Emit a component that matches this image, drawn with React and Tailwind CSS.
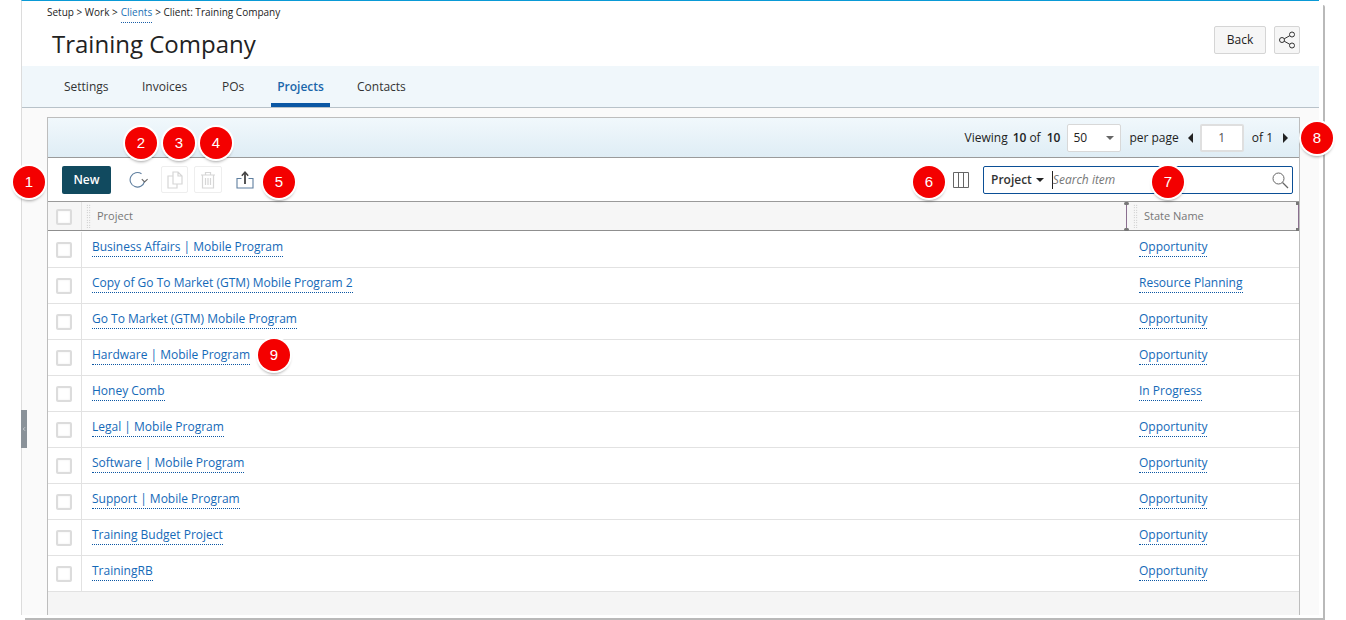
import { ChevronLeft } from "lucide-react";

const rows = [
  ["Business Affairs | Mobile Program", "Opportunity"],
  ["Copy of Go To Market (GTM) Mobile Program 2", "Resource Planning"],
  ["Go To Market (GTM) Mobile Program", "Opportunity"],
  ["Hardware | Mobile Program", "Opportunity"],
  ["Honey Comb", "In Progress"],
  ["Legal | Mobile Program", "Opportunity"],
  ["Software | Mobile Program", "Opportunity"],
  ["Support | Mobile Program", "Opportunity"],
  ["Training Budget Project", "Opportunity"],
  ["TrainingRB", "Opportunity"],
];

const tabs = [
  { label: "Settings", cls: "w-[78px] ml-[24px]" },
  { label: "Invoices", cls: "w-[80px]" },
  { label: "POs", cls: "w-[67px]" },
  { label: "Projects", cls: "w-[59px]", active: true },
  { label: "Contacts", cls: "w-[78px] ml-[9px]" },
];

const badges = [
  { n: 1, cls: "left-[13px] top-[166px]" },
  { n: 2, cls: "left-[125px] top-[127px]" },
  { n: 3, cls: "left-[163px] top-[127px]" },
  { n: 4, cls: "left-[200px] top-[127px]" },
  { n: 5, cls: "left-[263px] top-[166px]" },
  { n: 6, cls: "left-[913px] top-[166px]" },
  { n: 7, cls: "left-[1152px] top-[166px]" },
  { n: 8, cls: "left-[1301px] top-[122px]" },
  { n: 9, cls: "left-[258px] top-[339px]" },
];

const Badge = ({ n, cls }) => (
  <div
    className={`absolute ${cls} w-8 h-8 rounded-full bg-[#f40000] ring-2 ring-white shadow-[0_3px_3px_rgba(0,0,0,0.35)] flex items-center justify-center text-white text-[15px] font-['Liberation_Sans',sans-serif]`}
  >
    {n}
  </div>
);

const Check = () => (
  <div className="w-4 h-4 bg-white border-2 border-[#dcdcdc] rounded-[2px] shadow-[inset_0_0_2px_rgba(0,0,0,0.08)]" />
);

const Grip = () => (
  <div className="w-[5px] h-6 bg-[radial-gradient(#b5b5b5_0.7px,transparent_0.8px)] bg-[length:2.5px_2.5px]" />
);

const App = () => (
  <div className="relative w-[1346px] h-[620px] overflow-hidden bg-white font-['Open_Sans',sans-serif] text-[#222]">
    {/* offset page frame behind the window */}
    <div className="absolute left-[25px] top-[5px] w-[1300px] h-[615px] border-r-2 border-b-2 border-[#b9b9b9] rounded-tr-[2px]" />

    <div className="relative ml-[21px] w-[1298px] h-[615px] border-l border-[#dcdcdc] border-t border-t-[#0a9ad6] bg-[#fafafa]">
      <div className="h-[65px] bg-white flex justify-between">
        <div className="pl-[25px]">
          <div className="h-[21px] pt-[4px] text-[10px] leading-[15px] flex gap-[3px]">
            <span>Setup &gt; Work &gt;</span>
            <span className="h-[18px] text-[#1a6fb5] border-b border-dotted border-[#1a5fa8]">Clients</span>
            <span>&gt; Client: Training Company</span>
          </div>
          <h1 className="mt-[5px] ml-[5px] text-[24px] leading-[33px] font-normal">Training Company</h1>
        </div>
        <div className="pt-[25px] pr-[19px] flex gap-2">
          <button className="w-[52px] h-[28px] bg-[#f6f6f6] border border-[#d5d5d5] rounded-[2px] text-[12px]">Back</button>
          <button className="w-[26px] h-[28px] bg-[#f6f6f6] border border-[#d5d5d5] rounded-[2px] flex items-center justify-center">
            <svg width="16" height="18" viewBox="0 0 16 18" fill="none" stroke="#333" strokeWidth="1">
              <circle cx="13" cy="3.500" r="2.500" />
              <circle cx="3" cy="9" r="2.500" />
              <circle cx="13" cy="14.500" r="2.500" />
              <path d="M5.200 7.800 10.800 4.700M5.200 10.200l5.600 3.100" />
            </svg>
          </button>
        </div>
      </div>

      <div className="h-[42px] bg-[#f0f7fb] border-b border-[#b8c2c9] flex items-stretch text-[12px] text-[#333]">
        {tabs.map(t => (
          <div key={t.label} className={`${t.cls} flex`}>
            {t.active ? (
              <div className="w-full border-b-4 border-[#0b57a4] pt-[12px] text-center font-semibold text-[#1a66aa]">{t.label}</div>
            ) : (
              <div className="w-full pt-[12px] pl-[18px]">{t.label}</div>
            )}
          </div>
        ))}
      </div>

      <div className="ml-[25px] mt-[9px] w-[1253px] h-[498px] border-x border-t border-[#bdbdbd] bg-white flex flex-col">
        <div className="h-[40px] shrink-0 bg-gradient-to-b from-[#f1f8fc] to-[#dfedf5] border-b border-[#9a9a9a] flex items-center justify-end pr-[11px] text-[12px]">
          <span>Viewing</span>
          <span className="ml-[5px] font-semibold">10</span>
          <span className="ml-[3px]">of</span>
          <span className="ml-[6px] font-semibold">10</span>
          <div className="ml-[7px] w-[54px] h-[28px] bg-white border border-[#d8d8d8] rounded-[2px] flex items-center justify-between pl-[5px] pr-[6px]">
            <span>50</span>
            <span className="w-0 h-0 border-x-4 border-x-transparent border-t-[4px] border-t-[#666]" />
          </div>
          <span className="ml-[8px]">per page</span>
          <span className="ml-[9px] w-0 h-0 border-y-[5px] border-y-transparent border-r-[5px] border-r-[#222]" />
          <div className="ml-[7px] w-[44px] h-[28px] bg-white border-2 border-[#dfdfdf] rounded-[2px] flex items-center justify-center text-[#555]">1</div>
          <span className="ml-[8px]">of 1</span>
          <span className="ml-[10px] w-0 h-0 border-y-[5px] border-y-transparent border-l-[5px] border-l-[#222]" />
        </div>

        <div className="h-[44px] shrink-0 border-b border-[#9a9a9a] flex items-center pl-[14px]">
          <button className="w-[49px] h-[28px] bg-[#114a5f] rounded-[2px] text-white text-[12px] font-semibold">New</button>
          <svg className="ml-[18px]" width="20" height="18" viewBox="0 0 20 18" fill="none" stroke="#666" strokeWidth="1.100">
            <path d="M15.500 10.500A7.300 7.300 0 1 1 12.500 2.700" stroke="#5f7f9f" />
            <path d="M12.800 8.200 15.600 11l3-2.800" />
          </svg>
          <div className="ml-[12px] w-[27px] h-[27px] border border-[#eee] rounded-[2px] flex items-center justify-center">
            <svg width="16" height="18" viewBox="0 0 16 18" fill="none" stroke="#d6d6d6" strokeWidth="1.200">
              <path d="M6 1h5l4 4v8H6zM11 1v4h4M6 5H1v12h9v-4" />
            </svg>
          </div>
          <div className="ml-[6px] w-[28px] h-[27px] border border-[#eee] rounded-[2px] flex items-center justify-center">
            <svg width="16" height="18" viewBox="0 0 16 18" fill="none" stroke="#d6d6d6" strokeWidth="1.200">
              <path d="M1 4h14M5.500 4V1.500h5V4M2.500 4v13h11V4M5.500 7v7M8 7v7M10.500 7v7" />
            </svg>
          </div>
          <svg className="ml-[14px]" width="18" height="18" viewBox="0 0 18 18" fill="none" stroke="#5f7f9f" strokeWidth="1.100">
            <path d="M5.500 7.500H1V17H17V7.500H12.500" />
            <path d="M9 13V1.500" stroke="#444" strokeWidth="1.800" />
            <path d="M5.800 4.700 9 1.200l3.200 3.500" stroke="#444" strokeWidth="1.500" />
          </svg>
          <svg className="ml-[699px]" width="16" height="16" viewBox="0 0 16 16" fill="none" stroke="#666" strokeWidth="1">
            <path d="M.5.500h15v15H.5zM5.500.500v15M10.500.500v15" />
          </svg>
          <div className="ml-[14px] w-[310px] h-[28px] border border-[#0b4f96] rounded-[2px] flex items-center pl-[7px] pr-[3px] text-[12px]">
            <span className="font-semibold text-[#333]">Project</span>
            <span className="ml-[4px] w-0 h-0 border-x-4 border-x-transparent border-t-[4px] border-t-[#222]" />
            <span className="ml-[8px] h-[18px] border-l border-[#222]" />
            <span className="italic text-[#777]">Search item</span>
            <svg className="ml-auto" width="18" height="18" viewBox="0 0 18 18" fill="none" stroke="#666" strokeWidth="1">
              <circle cx="7.500" cy="7.500" r="5.500" />
              <path d="m11.500 11.500 5.500 5.500" strokeWidth="1.300" />
            </svg>
          </div>
        </div>

        <div className="h-[29px] shrink-0 bg-[#f6f6f6] border-b border-[#8f8f8f] flex text-[11px] text-[#777]">
          <div className="w-[34px] pr-[2px] pt-px border-r border-[#e2e2e2] flex items-center justify-center"><Check /></div>
          <div className="w-[1044px] flex items-center pl-[4px] gap-[6px]"><Grip /><span>Project</span></div>
          <div className="relative flex-1 border-x border-[#8a6f8f] flex items-center pl-[6px] gap-[6px]">
            <Grip /><span>State Name</span>
            <span className="absolute -left-[3px] top-0 w-[5px] h-[3px] rounded-full bg-[#777]" />
            <span className="absolute -left-[3px] -bottom-px w-[5px] h-[3px] rounded-full bg-[#777]" />
            <span className="absolute -right-px top-0 w-[3px] h-[3px] bg-[#777]" />
            <span className="absolute -right-px -bottom-px w-[3px] h-[3px] bg-[#777]" />
          </div>
        </div>

        <div className="pt-px">
          {rows.map(([name, state]) => (
            <div key={name} className="h-[36px] border-b border-[#e2e2e2] flex text-[12px] text-[#1469b8]">
              <div className="w-[34px] pr-[2px] border-r border-[#e2e2e2] flex items-center justify-center"><Check /></div>
              <div className="w-[1057px] pl-[10px] pt-[6px]">
                <span className="inline-block leading-[17px] pb-[1px] border-b border-dotted border-[#0b57a4]">{name}</span>
              </div>
              <div className="flex-1 pt-[6px]">
                <span className="inline-block leading-[17px] pb-[1px] border-b border-dotted border-[#0b57a4]">{state}</span>
              </div>
            </div>
          ))}
        </div>

        <div className="flex-1 bg-[#f5f5f5]" />
      </div>

      {/* collapse handle on the left edge */}
      <div className="absolute -left-px top-[409px] w-[6px] h-[38px] bg-[#8a9299] flex items-center justify-center">
        <ChevronLeft className="w-[6px] h-[6px] text-white" />
      </div>
    </div>

    {badges.map(b => <Badge key={b.n} {...b} />)}
  </div>
);

export default App;
